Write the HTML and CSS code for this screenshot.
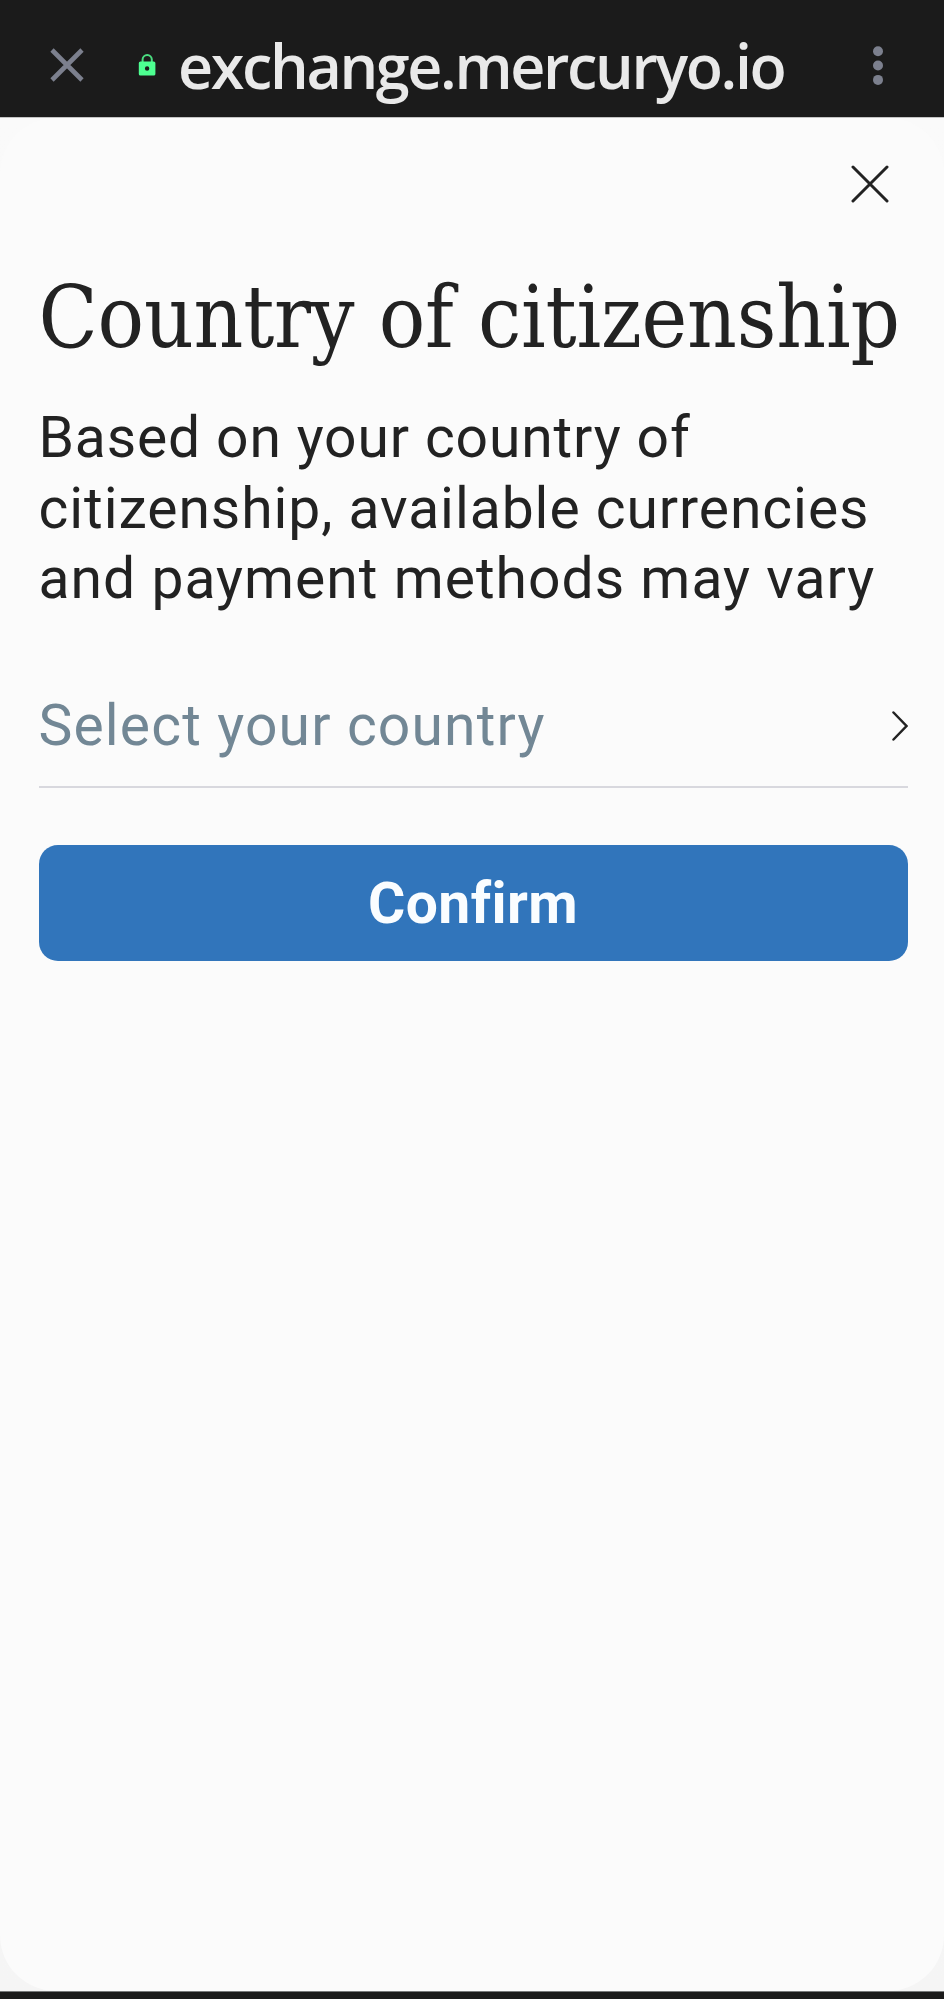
FILE: index.html
```html
<!DOCTYPE html>
<html lang="en">
<head>
<meta charset="utf-8">
<title>Country of citizenship</title>
<link rel="stylesheet" href="styles.css">
</head>
<body>
<header class="bar">
  <svg class="bar-close" viewBox="0 0 34 34"><path d="M2 2 32 32M32 2 2 32"/></svg>
  <svg class="lock" viewBox="0 0 18 22"><path class="shackle" d="M4.6 9V5.6a4.6 4.6 0 0 1 9.2 0V9"/><path class="lock-body" fill-rule="evenodd" d="M2.4 7.5h13.4a1.6 1.6 0 0 1 1.6 1.6v10.8a1.6 1.6 0 0 1-1.6 1.6H2.4a1.6 1.6 0 0 1-1.6-1.6V9.100a1.6 1.6 0 0 1 1.6-1.6ZM9.100 12.300a2.200 2.200 0 1 0 0 4.400a2.200 2.200 0 1 0 0-4.400Z"/></svg>
  <span class="url">exchange.mercuryo.io</span>
  <svg class="dots" viewBox="0 0 10 39"><circle cx="5" cy="5.200" r="5"/><circle cx="5" cy="19.500" r="5"/><circle cx="5" cy="33.900" r="5"/></svg>
</header>
<div class="page">
  <main class="sheet">
    <div class="sheet-top">
      <svg class="close" viewBox="0 0 38 38"><path d="M2 2 36 36M36 2 2 36"/></svg>
    </div>
    <h1 class="title">Country of citizenship</h1>
    <p class="text"><span class="line line-first">Based on your country of</span> <span class="line line-middle">citizenship, available currencies</span> <span class="line">and payment methods may vary</span></p>
    <div class="select">
      <span>Select your country</span>
      <svg class="chevron" viewBox="0 0 16 30"><path d="M1.500 1.500 14.500 15 1.500 28.500"/></svg>
    </div>
    <button class="confirm">Confirm</button>
  </main>
</div>
<div class="bottom"></div>
</body>
</html>
```
FILE: styles.css
```css
* { box-sizing: border-box; }
body {
  margin: 0;
  height: 1999px;
  display: flex;
  flex-direction: column;
  background: #1b1b1b;
  font-family: Roboto, sans-serif;
  color: #222;
}
svg { display: block; flex: none; fill: none; }
.bar {
  height: 117px;
  flex: none;
  display: flex;
  align-items: center;
  padding: 13px 61px 0 50px;
  background: #1b1b1b;
}
.bar-close { width: 34px; height: 34px; stroke: #7c808e; stroke-width: 4.6; }
.lock { width: 18px; height: 22px; margin-left: 54px; }
.shackle { stroke: #4ade80; stroke-width: 2; }
.lock-body { fill: #4dff91; }
.url {
  margin-left: 22px;
  font: 550 61px/83px "Open Sans", sans-serif;
  letter-spacing: -2.35px;
  color: #e9e9e9;
  white-space: nowrap;
}
.dots { width: 10px; height: 39px; margin-left: auto; fill: #7c808e; }
.page {
  flex: 1;
  background: linear-gradient(#fafafa, #f5f5f5);
  border-top: 1px solid #c4c4c4;
}
.sheet {
  height: 100%;
  padding: 0 36.5px 0 38.5px;
  background: #fbfbfb;
  border-radius: 56px;
}
.sheet-top { display: flex; justify-content: flex-end; padding: 47px 18.5px 64px 0; }
.close { width: 38px; height: 38px; stroke: #222; stroke-width: 3; stroke-linecap: round; }
.title {
  margin: 0;
  font: 400 86px/101px "DejaVu Serif Condensed", "DejaVu Serif", serif;
  letter-spacing: -0.2px;
  white-space: nowrap;
}
.text {
  margin: 35px 0 0;
  font-size: 57px;
  line-height: 70.67px;
  letter-spacing: 1.03px;
}
.line { display: block; white-space: nowrap; }
.line-first { letter-spacing: 0.85px; }
.line-middle { letter-spacing: 0.94px; }
.select {
  margin-top: 77px;
  padding-bottom: 27px;
  border-bottom: 2px solid #d8d8de;
  display: flex;
  align-items: center;
  justify-content: space-between;
  font-size: 57px;
  line-height: 67px;
  letter-spacing: 1.14px;
  color: #728795;
}
.chevron { width: 16px; height: 30px; stroke: #222; stroke-width: 2.5; stroke-linecap: round; }
.confirm {
  display: block;
  width: 100%;
  height: 116px;
  margin: 57px 0 0;
  padding: 0;
  border: 0;
  border-radius: 19px;
  background: #3175bb;
  color: #fafdff;
  font: 700 57px/67px Roboto, sans-serif;
  letter-spacing: 0.4px;
}
.bottom { height: 8px; flex: none; border-top: 1px solid #77797a; background: #1b1b1b; }
```
